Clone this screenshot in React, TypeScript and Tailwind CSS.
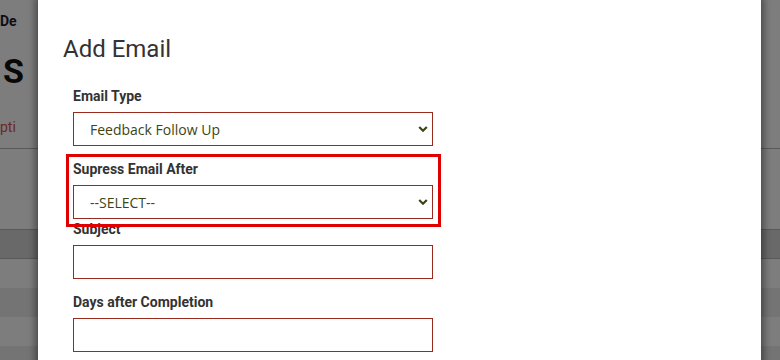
import React from 'react'

const rows = ['bg-white', 'bg-[#ededed]', 'bg-white', 'bg-[#ededed]']

const SelectField: React.FC<{ value: string; options: string[] }> = ({ value, options }) => (
  <div className="relative h-[34px] w-[360px]">
    <select
      defaultValue={value}
      className="h-full w-full appearance-none border border-[#982b1e] bg-white pl-[16px] pr-8 font-['Open_Sans',sans-serif] text-[14px] text-[#3c4614] outline-none"
    >
      {options.map((o) => (
        <option key={o}>{o}</option>
      ))}
    </select>
    <svg
      className="pointer-events-none absolute right-[5px] top-1/2 -translate-y-1/2"
      width="10"
      height="7"
      viewBox="0 0 10 7"
      fill="none"
    >
      <path d="M1.2 1.5l3.8 3.8 3.8-3.8" stroke="#3c4614" strokeWidth="2.2" />
    </svg>
  </div>
)

const Label: React.FC<{ children: React.ReactNode }> = ({ children }) => (
  <label className="mb-[6px] block text-[14px] font-bold leading-[20px] text-[#333]">{children}</label>
)

export default function App() {
  return (
    <div className="relative h-[360px] w-[780px] overflow-hidden bg-white font-['Roboto',sans-serif]">
      {/* page behind the dialog */}
      <div className="relative z-0 flex flex-col">
        <div className="pt-[11px] text-[14px] font-bold leading-[20px] text-[#1c1c2e]">De</div>
        <div className="mt-[20px] pl-[3px] text-[34px] font-bold leading-[40px] text-[#111]">S</div>
        <div className="mt-[26px] text-[14px] leading-[20px] text-[#d9534f]">pti</div>
        <div className="mt-[11px] border-b border-[#b5b5b5]" />
        <div className="h-[80px]" />
        <div className="h-[30px] border-y border-[#b5b5b5] bg-[#d6d6d6]" />
        {rows.map((c, i) => (
          <div key={i} className={`h-[29px] ${c}`} />
        ))}
      </div>

      <div className="absolute inset-0 z-10 bg-black/[0.51]" />

      {/* dialog */}
      <div className="absolute left-[38px] top-0 z-20 h-[400px] w-[723px] bg-white shadow-[0_0_7px_3px_rgba(0,0,0,0.4)]">
        <h2 className="px-[25px] pt-[35px] text-[24px] font-normal leading-[28px] text-[#333]">Add Email</h2>
        <form className="mt-[23px] pl-[35px]">
          <div className="mb-[13px]">
            <Label>Email Type</Label>
            <SelectField value="Feedback Follow Up" options={['Feedback Follow Up', 'Reminder']} />
          </div>
          <div className="relative w-[360px]">
            <Label>Supress Email After</Label>
            <SelectField value="--SELECT--" options={['--SELECT--', '1 Day', '7 Days']} />
            <span className="pointer-events-none absolute -bottom-[8px] -left-[7px] -right-[8px] -top-[5px] border-[3px] border-[#e00000]" />
          </div>
          <div className="mb-[13px]">
            <Label>Subject</Label>
            <input className="h-[34px] w-[360px] border border-[#982b1e] px-3 text-[14px] outline-none" />
          </div>
          <div className="mb-[13px]">
            <Label>Days after Completion</Label>
            <input className="h-[34px] w-[360px] border border-[#982b1e] px-3 text-[14px] outline-none" />
          </div>
        </form>
      </div>
    </div>
  )
}
